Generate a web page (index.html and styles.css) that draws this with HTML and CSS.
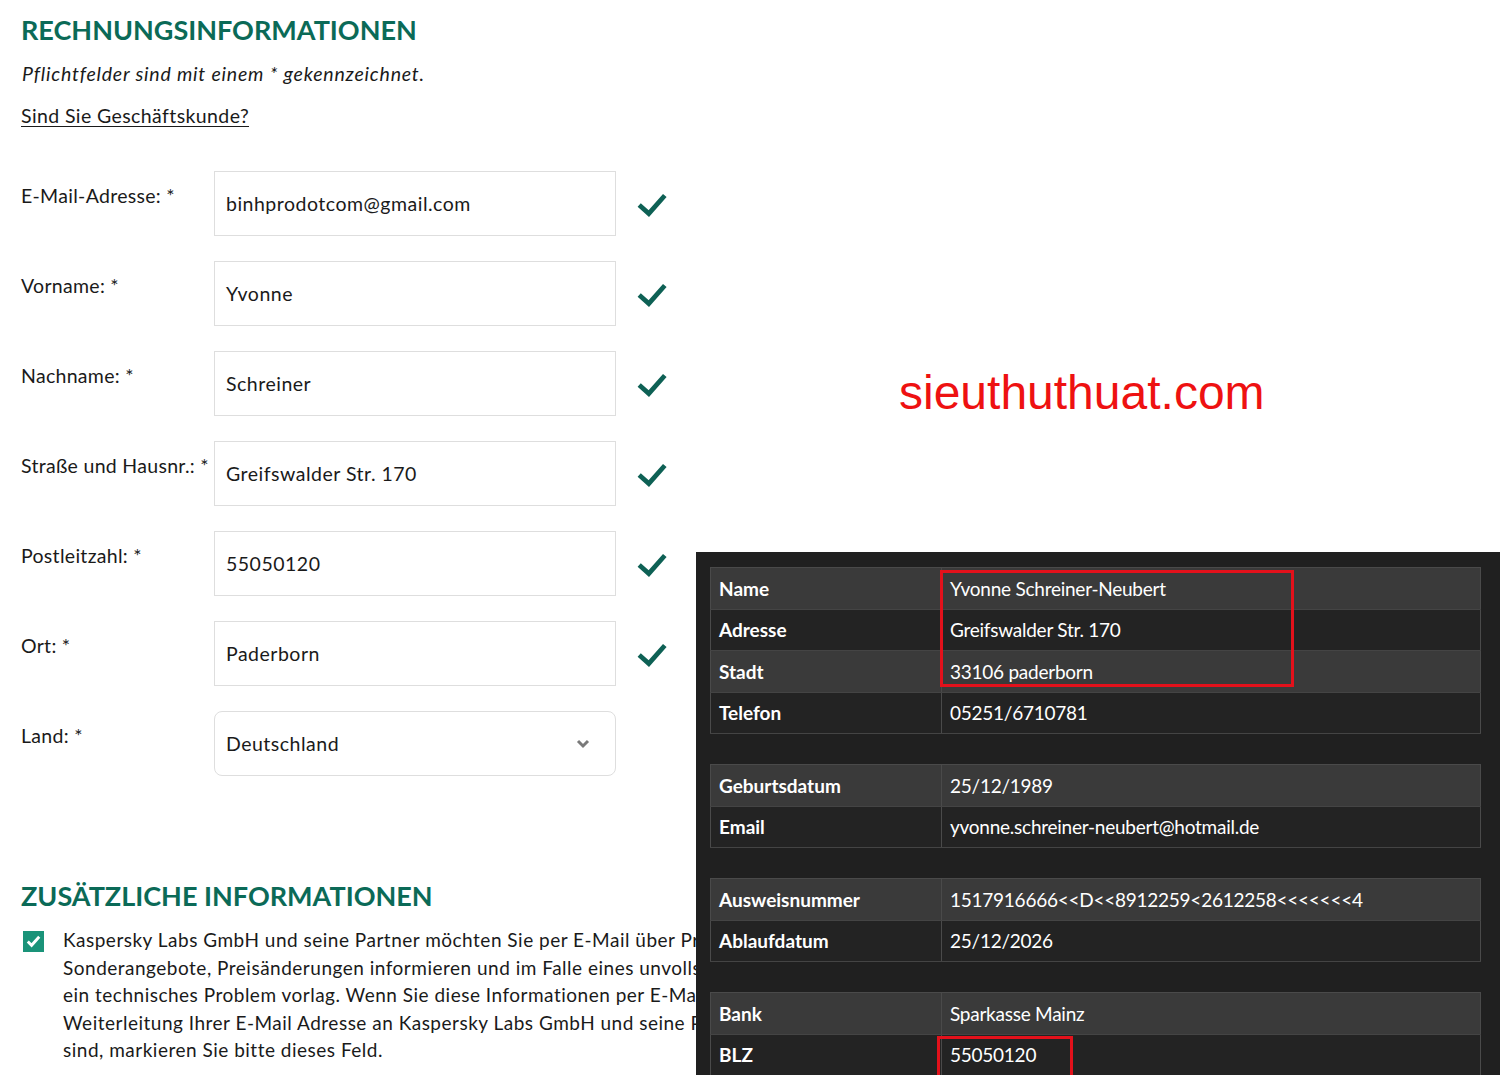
FILE: index.html
```html
<!DOCTYPE html>
<html lang="de">
<head>
  <meta charset="UTF-8">
  <meta name="viewport" content="width=device-width, initial-scale=1.0">
  <title>Rechnungsinformationen</title>
  <link rel="stylesheet" href="styles.css">
</head>

<body>
  <div class="page">
    <h1>RECHNUNGSINFORMATIONEN</h1>
    <p class="hint">Pflichtfelder sind mit einem * gekennzeichnet.</p>
    <a class="business" href="#">Sind Sie Geschäftskunde?</a>

    <div class="form">
      <label>E-Mail-Adresse: *</label>
      <div class="field">binhprodotcom@gmail.com</div>
      <svg class="ok" viewBox="0 0 30 24"><polyline points="3,13 12,21 27,4"/></svg>

      <label>Vorname: *</label>
      <div class="field">Yvonne</div>
      <svg class="ok" viewBox="0 0 30 24"><polyline points="3,13 12,21 27,4"/></svg>

      <label>Nachname: *</label>
      <div class="field">Schreiner</div>
      <svg class="ok" viewBox="0 0 30 24"><polyline points="3,13 12,21 27,4"/></svg>

      <label>Straße und Hausnr.: *</label>
      <div class="field">Greifswalder Str. 170</div>
      <svg class="ok" viewBox="0 0 30 24"><polyline points="3,13 12,21 27,4"/></svg>

      <label>Postleitzahl: *</label>
      <div class="field">55050120</div>
      <svg class="ok" viewBox="0 0 30 24"><polyline points="3,13 12,21 27,4"/></svg>

      <label>Ort: *</label>
      <div class="field">Paderborn</div>
      <svg class="ok" viewBox="0 0 30 24"><polyline points="3,13 12,21 27,4"/></svg>

      <label>Land: *</label>
      <div class="field select">
        <span>Deutschland</span>
        <svg class="chevron" viewBox="0 0 14 10"><polyline points="2,2 7,7 12,2"/></svg>
      </div>
      <span></span>
    </div>

    <h2>ZUSÄTZLICHE INFORMATIONEN</h2>
    <div class="consent">
      <span class="box">
        <svg viewBox="0 0 22 22"><polyline points="5,11 9,15 17,6"/></svg>
      </span>
      <p>Kaspersky Labs GmbH und seine Partner möchten Sie per E-Mail über Produkte und<br>
        Sonderangebote, Preisänderungen informieren und im Falle eines unvollständigen Kaufs kontaktieren,<br>
        ein technisches Problem vorlag. Wenn Sie diese Informationen per E-Mail erhalten möchten und mit der<br>
        Weiterleitung Ihrer E-Mail Adresse an Kaspersky Labs GmbH und seine Partner einverstanden<br>
        sind, markieren Sie bitte dieses Feld.</p>
    </div>
  </div>

  <div class="watermark">sieuthuthuat.com</div>

  <div class="leak">
    <table>
      <tr><th>Name</th><td>Yvonne Schreiner-Neubert</td></tr>
      <tr><th>Adresse</th><td>Greifswalder Str. 170</td></tr>
      <tr><th>Stadt</th><td>33106 paderborn</td></tr>
      <tr><th>Telefon</th><td>05251/6710781</td></tr>
    </table>
    <table>
      <tr><th>Geburtsdatum</th><td>25/12/1989</td></tr>
      <tr><th>Email</th><td>yvonne.schreiner-neubert@hotmail.de</td></tr>
    </table>
    <table>
      <tr><th>Ausweisnummer</th><td>1517916666&lt;&lt;D&lt;&lt;8912259&lt;2612258&lt;&lt;&lt;&lt;&lt;&lt;&lt;4</td></tr>
      <tr><th>Ablaufdatum</th><td>25/12/2026</td></tr>
    </table>
    <table>
      <tr><th>Bank</th><td>Sparkasse Mainz</td></tr>
      <tr><th>BLZ</th><td>55050120</td></tr>
    </table>
    <div class="mark mark-address"></div>
    <div class="mark mark-blz"></div>
  </div>
</body>
</html>
```

FILE: styles.css
```css
body {
  margin: 0;
  background: #ffffff;
  color: #1a1a1a;
  font-family: "Lato", "Open Sans", sans-serif;
  height: 1075px;
  overflow: hidden;
  position: relative;
}

.page {
  padding: 12px 0 0 21px;
}

h1, h2 {
  margin: 0;
  color: #0b6a57;
  font-weight: 700;
  font-size: 27px;
}

h1 {
  margin-top: 1px;
}

.hint {
  margin: 16px 0 0 1px;
  font-size: 19.5px;
  font-style: italic;
  letter-spacing: 0.8px;
}

.business {
  display: inline-block;
  margin-top: 19px;
  font-size: 19.5px;
  letter-spacing: 0.4px;
  color: #1a1a1a;
  text-decoration: underline;
  text-underline-offset: 3px;
}

.form {
  display: grid;
  grid-template-columns: 193px 402px 60px;
  grid-auto-rows: 65px;
  row-gap: 25px;
  margin-top: 44px;
  font-size: 19.5px;
  letter-spacing: 0.5px;
}

.form label {
  padding-top: 13px;
  letter-spacing: 0.3px;
}

.field {
  border: 1.5px solid #dedede;
  display: flex;
  align-items: center;
  padding: 0 11px;
}

.field.select {
  border-radius: 8px;
  justify-content: space-between;
  padding-right: 25px;
}

.chevron {
  width: 14px;
  height: 10px;
  fill: none;
  stroke: #7a7a7a;
  stroke-width: 3;
}

.ok {
  width: 32px;
  height: 26px;
  align-self: center;
  margin-left: 20px;
  fill: none;
  stroke: #0e6155;
  stroke-width: 4.5;
}

h2 {
  margin-top: 103px;
}

.consent {
  display: flex;
  gap: 19px;
  width: 673px;
  overflow: hidden;
  margin-top: 14px;
  margin-left: 2px;
}

.box {
  flex: none;
  width: 21px;
  height: 21px;
  margin-top: 5px;
  background: #1a9379;
}

.box svg {
  width: 21px;
  height: 21px;
  fill: none;
  stroke: #ffffff;
  stroke-width: 3;
}

.consent p {
  margin: 0;
  white-space: nowrap;
  font-size: 19px;
  letter-spacing: 0.5px;
  line-height: 27.5px;
}

.watermark {
  position: absolute;
  left: 899px;
  top: 365px;
  color: #ee1111;
  font-family: "Liberation Sans", Arial, sans-serif;
  font-size: 48px;
}

/* dunkles Overlay mit den Daten */
.leak {
  position: absolute;
  left: 696px;
  top: 552px;
  width: 804px;
  height: 523px;
  overflow: hidden;
  background: #202020;
  padding: 15px 0 0 14px;
  box-sizing: border-box;
}

.leak table {
  width: 771px;
  border-collapse: collapse;
  margin-bottom: 30px;
  font-family: "Lato", sans-serif;
  font-size: 19px;
  color: #ffffff;
  border: 1px solid #4a4a4a;
}

.leak tr:nth-child(odd) {
  background: #3a3a3a;
}

.leak tr:nth-child(even) {
  background: #232323;
}

.leak th, .leak td {
  height: 40.5px;
  padding: 0 8px;
  text-align: left;
  border-bottom: 1px solid #444444;
}

.leak th {
  width: 214px;
  font-weight: 700;
  border-right: 1px solid #4a4a4a;
}

.leak td {
  font-weight: 400;
  letter-spacing: -0.25px;
}

.mark {
  position: absolute;
  border: 3px solid #e3111b;
}

.mark-address {
  left: 244px;
  top: 18px;
  width: 348px;
  height: 111px;
}

.mark-blz {
  left: 241px;
  top: 484px;
  width: 130px;
  height: 50px;
}
```
